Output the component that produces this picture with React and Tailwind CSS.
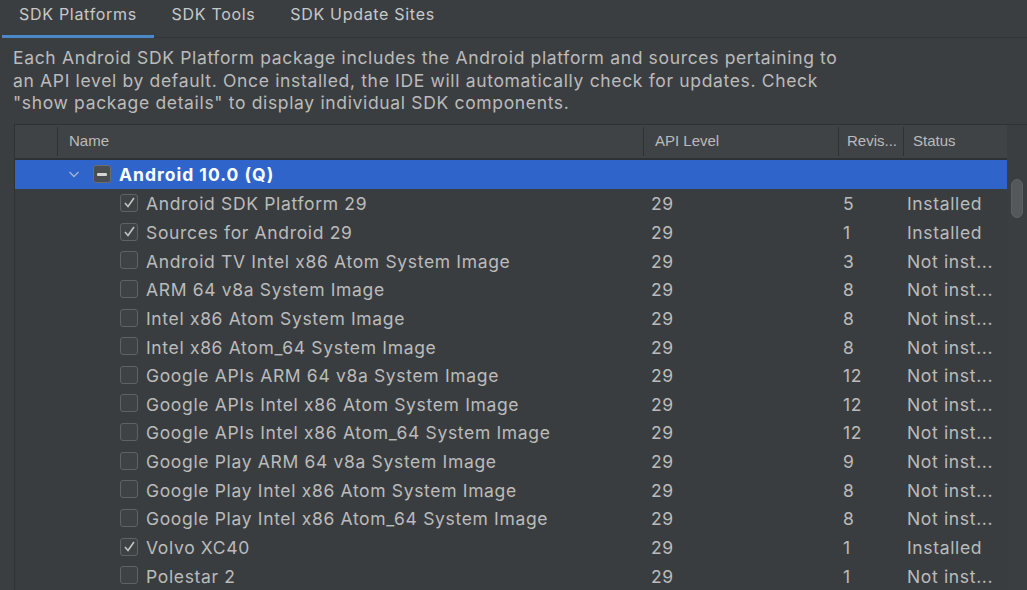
import React from "react";

const rows = [
  ["Android SDK Platform 29", true, "29", "5", "Installed"],
  ["Sources for Android 29", true, "29", "1", "Installed"],
  ["Android TV Intel x86 Atom System Image", false, "29", "3", "Not inst..."],
  ["ARM 64 v8a System Image", false, "29", "8", "Not inst..."],
  ["Intel x86 Atom System Image", false, "29", "8", "Not inst..."],
  ["Intel x86 Atom_64 System Image", false, "29", "8", "Not inst..."],
  ["Google APIs ARM 64 v8a System Image", false, "29", "12", "Not inst..."],
  ["Google APIs Intel x86 Atom System Image", false, "29", "12", "Not inst..."],
  ["Google APIs Intel x86 Atom_64 System Image", false, "29", "12", "Not inst..."],
  ["Google Play ARM 64 v8a System Image", false, "29", "9", "Not inst..."],
  ["Google Play Intel x86 Atom System Image", false, "29", "8", "Not inst..."],
  ["Google Play Intel x86 Atom_64 System Image", false, "29", "8", "Not inst..."],
  ["Volvo XC40", true, "29", "1", "Installed"],
  ["Polestar 2", false, "29", "1", "Not inst..."],
];

function Check({ checked }) {
  return (
    <div className="w-[18px] h-[18px] rounded-[3px] border border-[#5f6264] bg-[#3f4244] flex items-center justify-center shrink-0">
      {checked && (
        <svg width="13" height="13" viewBox="0 0 13 13">
          <path d="M2 7 L5 10.5 L11 2" fill="none" stroke="#c4c4c4" strokeWidth="1.6" />
        </svg>
      )}
    </div>
  );
}

export default function App() {
  return (
    <div
      className="w-[1027px] h-[590px] overflow-hidden bg-[#3b3e41] text-[#bbbbbb] flex flex-col"
      style={{ fontFamily: 'Inter, "Liberation Sans", Arial, sans-serif' }}
    >
      <div className="h-[38px] flex border-b border-[#323436] shrink-0 text-[16px] tracking-[0.7px] text-[#c8c8c8]">
        <div className="relative w-[152px] ml-[2px] flex justify-center pt-[2px]">
          SDK Platforms
          <div className="absolute left-0 right-0 bottom-[-1px] h-[3px] bg-[#4a88c7]" />
        </div>
        <div className="w-[119px] flex justify-center pt-[2px]">SDK Tools</div>
        <div className="w-[179px] flex justify-center pt-[2px]">SDK Update Sites</div>
      </div>
      <div className="px-[13px] pt-[9px] text-[17.5px] leading-[22.5px] tracking-[0.66px] text-[#bbbbbb] h-[86px] shrink-0 whitespace-nowrap">
        Each Android SDK Platform package includes the Android platform and sources pertaining to
        <br />
        an API level by default. Once installed, the IDE will automatically check for updates. Check
        <br />
        "show package details" to display individual SDK components.
      </div>
      <div className="ml-[14px] flex flex-1 border-l border-t border-[#2f3133] bg-[#3a3d3f]">
        <div className="flex-1 flex flex-col">
          <div
            className="h-[35px] flex border-b-2 border-[#2f3133] bg-[#404346] text-[15px] text-[#bbbbbb] shrink-0"
            style={{ fontFamily: '"Liberation Sans", Arial, sans-serif' }}
          >
            <div className="w-[43px] border-r border-[#2f3133] my-[2px]" />
            <div className="w-[586px] border-r border-[#2f3133] pl-[11px] flex items-center my-[2px]">Name</div>
            <div className="w-[195px] border-r border-[#2f3133] pl-[11px] flex items-center my-[2px]">API Level</div>
            <div className="w-[65px] border-r border-[#2f3133] pl-[8px] flex items-center my-[2px]">Revis...</div>
            <div className="flex-1 pl-[9px] flex items-center my-[2px]">Status</div>
          </div>
          <div className="h-[28.65px] bg-[#2f65ca] flex items-center shrink-0">
            <div className="w-[52px]" />
            <svg width="14" height="14" viewBox="0 0 14 14" className="mr-[12px]">
              <path d="M2.5 5 L7 9.5 L11.5 5" fill="none" stroke="#9fb3d6" strokeWidth="1.4" />
            </svg>
            <div className="w-[18px] h-[18px] rounded-[3px] border border-[#6a6d70] bg-[#4b4e51] flex items-center justify-center">
              <div className="w-[10px] h-[3px] bg-[#d5d5d5] rounded-[1px]" />
            </div>
            <div className="ml-[8px] pt-[1px] text-[17.5px] font-bold tracking-[1px] text-white">Android 10.0 (Q)</div>
          </div>
          {rows.map(([name, checked, api, rev, status]) => (
            <div key={name} className="h-[28.65px] flex items-center text-[17.5px] tracking-[0.66px] shrink-0">
              <div className="w-[105px]" />
              <Check checked={checked} />
              <div className="ml-[8px] pt-[3px] w-[502px] whitespace-nowrap">{name}</div>
              <div className="w-[195px] pt-[3px] pl-[3px]">{api}</div>
              <div className="w-[64px] pt-[3px]">{rev}</div>
              <div className="flex-1 pt-[3px] whitespace-nowrap">{status}</div>
            </div>
          ))}
        </div>
        <div className="w-[20px] bg-[#3b3e40] flex flex-col shrink-0">
          <div className="h-[54px]" />
          <div className="ml-[4px] w-[12px] h-[39px] rounded-full bg-[#55585b] border border-[#5e6164]" />
        </div>
      </div>
    </div>
  );
}
